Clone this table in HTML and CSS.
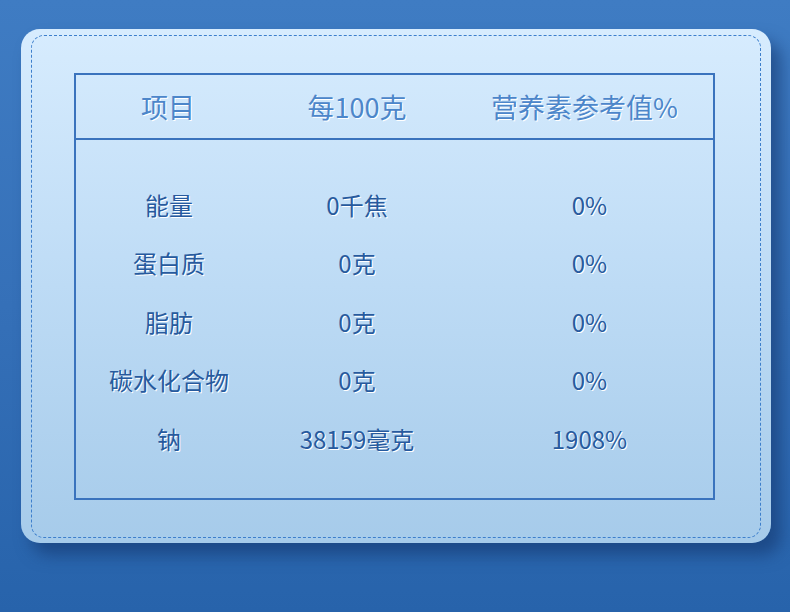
FILE: index.html
```html
<!DOCTYPE html>
<html lang="zh">
<head>
<meta charset="utf-8">
<link rel="stylesheet" href="styles.css">
</head>
<body>
<div class="card">
  <div class="dashed">
    <div class="table">
      <div class="head">
        <div class="c1">项目</div>
        <div class="c2">每100克</div>
        <div class="c3">营养素参考值%</div>
      </div>
      <div class="body">
        <div class="row"><div class="c1">能量</div><div class="c2">0千焦</div><div class="c3">0%</div></div>
        <div class="row"><div class="c1">蛋白质</div><div class="c2">0克</div><div class="c3">0%</div></div>
        <div class="row"><div class="c1">脂肪</div><div class="c2">0克</div><div class="c3">0%</div></div>
        <div class="row"><div class="c1">碳水化合物</div><div class="c2">0克</div><div class="c3">0%</div></div>
        <div class="row"><div class="c1">钠</div><div class="c2">38159毫克</div><div class="c3">1908%</div></div>
      </div>
    </div>
  </div>
</div>
</body>
</html>
```
FILE: styles.css
```css
html, body {
  margin: 0;
  padding: 0;
}
body {
  width: 790px;
  height: 612px;
  overflow: hidden;
  background: linear-gradient(180deg, #3f7cc3 0%, #3570b8 50%, #2763ab 100%);
  font-family: "Noto Sans CJK SC", "Noto Sans", sans-serif;
  padding: 29px 0 0 21px;
  box-sizing: border-box;
}
.card {
  width: 750px;
  height: 514px;
  border-radius: 19px;
  background: linear-gradient(180deg, #d7ecfe 0%, #bddbf5 50%, #a6cbea 100%);
  box-shadow: 10px 12px 16px rgba(20, 55, 110, 0.6);
  padding: 6px 10px 5px 10px;
  box-sizing: border-box;
}
.dashed {
  height: 100%;
  border: 1px dashed #3d7fcc;
  border-radius: 13px;
  box-sizing: border-box;
  padding: 37px 45px 0 42px;
}
.table {
  width: 641px;
  height: 427px;
  border: 2px solid #3a73bd;
  box-sizing: border-box;
}
.head {
  display: grid;
  grid-template-columns: 184px 194px 1fr;
  height: 63px;
  border-bottom: 2px solid #3a73bd;
  align-items: center;
  text-align: center;
  color: #4c86ca;
  font-size: 27px;
  text-shadow: 1px 1px 0 #ffffff;
}
.head .c3 { padding-left: 2px; }
.body {
  padding-top: 35px;
}
.row {
  display: grid;
  grid-template-columns: 184px 194px 1fr;
  height: 58.5px;
  align-items: center;
  text-align: center;
  color: #275a9e;
  font-size: 24px;
  font-weight: 400;
  text-shadow: 1px 1px 0 #ffffff;
}
.row .c1 { padding-left: 2px; }
.row .c3 { padding-left: 12px; }
```
